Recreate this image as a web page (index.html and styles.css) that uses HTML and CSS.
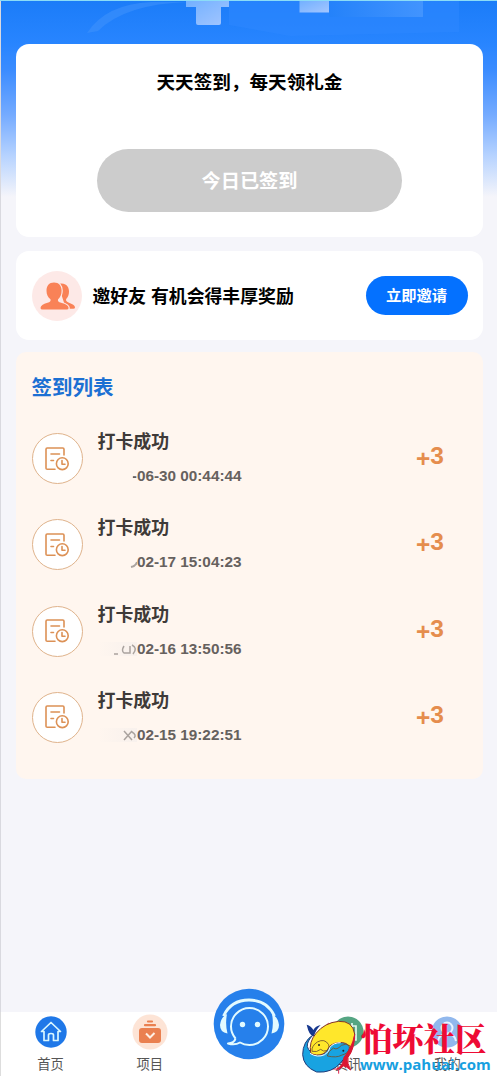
FILE: index.html
```html
<!DOCTYPE html>
<html lang="zh-CN">
<head>
<meta charset="utf-8">
<title>签到</title>
<link rel="stylesheet" href="styles.css">
</head>
<body>
<svg class="defs" width="0" height="0">
  <symbol id="record" viewBox="0 0 24 24">
    <g fill="none" stroke="#dc9156" stroke-width="1.6" stroke-linecap="round" stroke-linejoin="round">
      <path d="M10 22.300H2.200Q1 22.300 1 21.300V2.200Q1 1 2.200 1H17.800Q19 1 19 2.200V8M6 7h8.500M6 13.500h2.500"/>
      <circle cx="17.300" cy="16.700" r="5.900"/><path d="M17 13.500v3.700h3"/>
    </g>
  </symbol>
</svg>
<main class="page">
  <svg class="hero-art" viewBox="0 0 497 44" width="497" height="44">
    <defs>
      <linearGradient id="slab" x2="1"><stop stop-color="#2482fa"/><stop offset="1" stop-color="#4294fe"/></linearGradient>
      <linearGradient id="peg" x2="1" y2="1"><stop stop-color="#72b0ff"/><stop offset="1" stop-color="#a3c6ff"/></linearGradient>
    </defs>
    <path d="M87 33Q106 4 151 2H188Q125 4 98 31Z" fill="#3d91fc" opacity=".6"/>
    <path d="M229 1H459V32L290 36 229 25Z" fill="#2d87ff" opacity=".6"/>
    <path d="M329 1h94v16h-94z" fill="url(#slab)"/>
    <path d="M186 1h43v6h-8v16q0 2-2 2h-21q-2 0-2-2V7h-10z" fill="url(#peg)"/>
    <path d="M299.500 1h29.500v11.500h-29.500z" fill="url(#peg)"/>
    <path d="M0 .5h497" stroke="#8bdcf7"/>
  </svg>
  <section class="card sign">
    <h1 class="sign-title">天天签到，每天领礼金</h1>
    <button class="sign-button">今日已签到</button>
  </section>
  <section class="card invite">
    <svg class="invite-icon" viewBox="0 0 50 50" width="50" height="50">
      <circle cx="25" cy="25" r="25" fill="#fde9e7"/>
      <path d="M26 13.200Q29 12 31.500 12.800C35 13.700 37 16.500 37 20.500c0 3-1 5.500-2.800 7.500-.6 1.600.3 2.600 2.300 3.400 4 1.500 6.500 3 6.500 5q0 1.300-1.800 1.300H34Z" fill="#f98257"/>
      <path d="M22 11.600c5 0 7.600 3.400 7.600 8.200 0 4-1.500 6.500-3.500 8.500-.7 2 .5 2.700 3 3.500 5 1.400 7.500 3 7.500 5.200q0 1.600-2 1.600H10.500q-2 0-2-1.600c0-2.200 2.500-3.800 7-5.200 2.500-.8 3.500-1.500 3-3.500-2.500-2-4-4.500-4-8.500 0-4.800 2.500-8.200 7.500-8.200z" fill="#f98257" stroke="#fde9e7" stroke-width="2.400" paint-order="stroke"/>
    </svg>
    <p class="invite-text">邀好友 有机会得丰厚奖励</p>
    <button class="invite-button">立即邀请</button>
  </section>
  <section class="list">
    <h2 class="list-title">签到列表</h2>
    <ul class="records">
      <li class="record">
        <span class="record-icon"><svg width="24" height="24"><use href="#record"/></svg></span>
        <div class="record-body"><h3 class="record-title">打卡成功</h3><div class="record-date"><span class="cut">-</span>06-30 00:44:44</div></div>
        <strong class="points"><span class="plus">+</span>3</strong>
      </li>
      <li class="record">
        <span class="record-icon"><svg width="24" height="24"><use href="#record"/></svg></span>
        <div class="record-body"><h3 class="record-title">打卡成功</h3><div class="record-date"><svg class="smudge" width="40" height="14"><path d="M33 12q5-1 6-5" stroke="#aaa39f" stroke-width="2" fill="none"/></svg>02-17 15:04:23</div></div>
        <strong class="points"><span class="plus">+</span>3</strong>
      </li>
      <li class="record">
        <span class="record-icon"><svg width="24" height="24"><use href="#record"/></svg></span>
        <div class="record-body"><h3 class="record-title">打卡成功</h3><div class="record-date"><svg class="smudge shade" width="40" height="14"><path d="M16 12h4M26 4q-3 5 0 7h6V4M34 3q6 3 1 9" stroke="#aaa39f" stroke-width="1.500" fill="none"/></svg>02-16 13:50:56</div></div>
        <strong class="points"><span class="plus">+</span>3</strong>
      </li>
      <li class="record">
        <span class="record-icon"><svg width="24" height="24"><use href="#record"/></svg></span>
        <div class="record-body"><h3 class="record-title">打卡成功</h3><div class="record-date"><svg class="smudge shade" width="40" height="14"><path d="M26 3l8 9M34 3l-8 9M34 4q5 3 2 6" stroke="#aaa39f" stroke-width="1.500" fill="none"/></svg>02-15 19:22:51</div></div>
        <strong class="points"><span class="plus">+</span>3</strong>
      </li>
    </ul>
  </section>
</main>
<nav class="tabs">
  <a class="tab">
    <svg width="36" height="36" viewBox="0 0 36 36"><circle cx="18" cy="18" r="15.700" fill="#1f78e8"/><path d="M11 17.500H8.500L18 8.500 27.500 17.500H25v9h-4.500V21q0-1.500-2.500-1.500T15.500 21v5.500H11Z" fill="none" stroke="#d9f7ff" stroke-width="1.700" stroke-linejoin="round"/></svg>
    <span>首页</span>
  </a>
  <a class="tab">
    <svg width="36" height="36" viewBox="0 0 36 36"><circle cx="18" cy="18" r="17.500" fill="#fde4d6"/><path d="M16 7.500h4M13 11.200h10" stroke="#ea8050" stroke-width="2.200" stroke-linecap="round"/><rect x="7" y="14" width="22" height="15" rx="3" fill="#ea8050"/><path d="M14 19.500l4 4 4.500-4.500" fill="none" stroke="#fff0e5" stroke-width="2"/></svg>
    <span>项目</span>
  </a>
  <a class="tab service">
    <svg width="72" height="72" viewBox="0 0 72 72"><circle cx="36" cy="36" r="35.300" fill="#2680eb"/><g fill="none" stroke="#e2faff"><path d="M10.500 28Q18 12 36 12t25.500 16" stroke-width="2.800"/><path d="M22.500 50.500Q18 45 18 38.500A18.500 18.500 0 1 1 36.500 57Q31 57 27 54.500 22 57.500 15 55.500q6.500-.5 7.500-5" stroke-width="2" stroke-linejoin="round"/></g><path d="M14 26Q12 36 14.500 45.500 7 44.500 7 37 8 29 14 26M59 26q2 10-.5 19.500Q66 44.500 66 37 65 29 59 26" fill="#e2faff"/><circle cx="29.500" cy="36.500" r="2.700" fill="#e2faff"/><circle cx="44.500" cy="36.500" r="2.700" fill="#e2faff"/></svg>
  </a>
  <a class="tab">
    <svg width="36" height="36" viewBox="0 0 36 36"><circle cx="18" cy="18" r="15.500" fill="#55a583"/><path d="M10 12h16v14H10zM14 9v5M18 9v5M22 9v5M13 18h10M13 22h10" fill="none" stroke="#e2f7ec" stroke-width="1.700"/></svg>
    <span>资讯</span>
  </a>
  <a class="tab">
    <svg width="36" height="36" viewBox="0 0 36 36"><circle cx="18" cy="18" r="15.500" fill="#91b8ed"/><circle cx="18" cy="14" r="5.500" fill="none" stroke="#e8f3ff" stroke-width="2"/><path d="M9 27q1-7 9-7t9 7" fill="none" stroke="#e8f3ff" stroke-width="2"/></svg>
    <span>我的</span>
  </a>
</nav>
<div class="watermark">
  <svg class="fish" width="60" height="56" viewBox="3 18 180 168">
    <path d="M84 42V28h30M76 165h40v14" fill="none" stroke="#e3264c" stroke-width="3" stroke-dasharray="16 5"/>
    <path d="M20 32Q34 36 40 48 46 36 62 33 48 46 42 66 28 68 20 32Z" fill="#17388e"/>
    <path d="M40 62Q8 82 8 122 10 158 50 174 96 178 122 146L134 132Q156 118 156 98 148 82 118 84 90 86 80 110 70 124 52 122 28 118 22 98 20 82 40 62Z" fill="#18a3e1" stroke="#253b78" stroke-width="3"/>
    <path d="M32 116Q26 84 48 58 74 26 116 22 158 20 164 60 164 98 134 130 150 108 148 98 140 84 116 86 90 88 82 108 72 124 50 123 36 122 32 116Z" fill="#ffe72b" stroke="#82362c" stroke-width="3"/>
    <path d="M36 112Q34 96 52 84 74 72 86 92 92 104 80 110 70 114 62 106 50 116 36 112M82 126Q84 112 100 102q10 8 24-8 14-8 28 2-4 22-28 28-14 8-42 2" fill="none" stroke="#70512c" stroke-width="2.500"/>
    <path d="M30 118Q52 132 74 122 88 114 90 100 100 86 122 86" fill="none" stroke="#fff" stroke-width="3"/>
    <circle cx="57" cy="93" r="3" fill="#222"/><circle cx="130" cy="110" r="3" fill="#222"/>
    <path d="M164 62Q163 106 144 130q-4 18 8 38-14-12-22-12-8 10-20 10 20-12 22-36Q156 102 164 62Z" fill="#db1733" stroke="#db1733" stroke-width="3"/>
  </svg>
  <div class="brand"><div class="brand-name">怕坏社区</div><div class="brand-url">www.pahuai.com</div></div>
</div>
</body>
</html>
```
FILE: styles.css
```css
* { box-sizing: border-box; }
body, h1, h2, h3, p, ul { margin: 0; padding: 0; }
body {
  width: 497px;
  height: 1076px;
  overflow: hidden;
  position: relative;
  background: #f5f5fa;
  font-family: "Liberation Sans", "Noto Sans CJK SC", sans-serif;
}
.defs { position: absolute; }
.page {
  height: 1012px;
  border-left: 1px solid #d9d9df;
  padding: 0 14px 0 15px;
  background: linear-gradient(#1b7cf8 0, #2885ff 44px, #3b8cff 70px, #75abff 115px, #b5d2ff 155px, #f5f5fa 197px);
}
.hero-art { display: block; margin-left: -16px; }
.card { background: #fff; border-radius: 13px; }
.sign {
  height: 193px;
  padding-top: 26px;
  display: flex;
  flex-direction: column;
  align-items: center;
}
.sign-title { font-size: 18.6px; line-height: 26px; white-space: nowrap; }
button { border: 0; font-family: inherit; font-weight: bold; color: #fff; padding: 0; }
.sign-button {
  width: 305px;
  height: 63px;
  margin-top: 53px;
  padding-bottom: 1px;
  border-radius: 32px;
  background: #ccc;
  font-size: 19.2px;
}
.invite {
  height: 89px;
  margin-top: 14px;
  padding: 0 15.5px 0 16px;
  display: flex;
  align-items: center;
}
.invite-icon { flex: none; }
.invite-text { flex: 1; margin: -2px 0 0 10.5px; font-size: 17.85px; font-weight: bold; white-space: nowrap; }
.invite-button {
  width: 102px;
  height: 39px;
  padding-bottom: 4px;
  border-radius: 20px;
  background: #0471ff;
  font-size: 15.3px;
}
.list {
  height: 427px;
  margin-top: 12px;
  padding: 21px 15px 0 15.5px;
  border-radius: 10px;
  background: #fff6ef;
}
.list-title { color: #1c70d3; font-size: 20.5px; line-height: 30px; }
.records { list-style: none; margin-top: 19px; }
.record { display: flex; height: 86.3px; }
.record-icon {
  width: 51px;
  height: 51px;
  margin-top: 11px;
  display: grid;
  place-items: center;
  border: 1px solid #dfb38c;
  border-radius: 50%;
  background: #fff;
}
.record-body { flex: 1; padding: 7px 0 0 15px; }
.record-title { color: #3e3a38; font-size: 17.9px; line-height: 26px; }
.record-date {
  width: 144px;
  margin-top: 11px;
  display: flex;
  justify-content: flex-end;
  align-items: center;
  white-space: pre;
  color: #66615e;
  font-size: 15.3px;
  font-weight: bold;
  line-height: 20px;
}
.cut { clip-path: inset(0 0 0 1px); }
.shade { background: linear-gradient(90deg, #fff6ef, #f8f1ed); }
.points {
  margin: 20px 24px 0 0;
  display: flex;
  color: #e58d4d;
  font-size: 24.5px;
  line-height: 28px;
}
.plus { padding-top: 3px; }
.tabs { height: 64px; display: flex; background: #fff; border-left: 1px solid #ddd; }
.tab {
  flex: 1;
  padding-top: 2px;
  display: flex;
  flex-direction: column;
  align-items: center;
  color: #555;
  font-size: 13.3px;
  line-height: 20px;
}
.tab span { margin-top: 5px; }
.service { margin-top: -24px; padding: 0; }
.watermark { position: absolute; left: 301px; top: 1020px; display: flex; }
.brand { width: 132px; white-space: nowrap; }
.brand-name {
  color: #ee0b35;
  font-family: "Noto Serif CJK SC", "Noto Sans CJK SC", serif;
  font-size: 31.3px;
  font-weight: 900;
  line-height: 36px;
}
.brand-url {
  margin-left: -1px;
  color: #169fe0;
  font-family: "Open Sans", sans-serif;
  font-size: 15px;
  font-weight: 700;
  line-height: 16px;
}
```
